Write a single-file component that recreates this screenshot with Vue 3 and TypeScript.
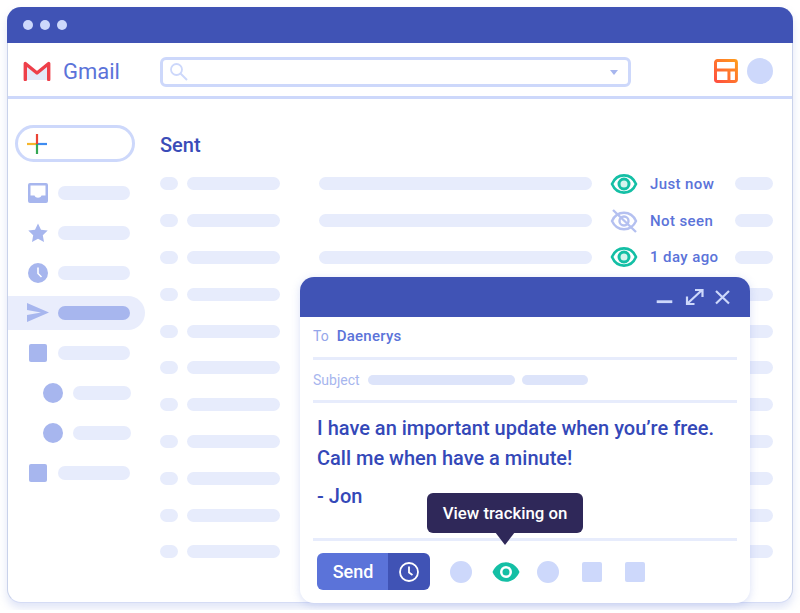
<template>
  <div class="window">
    <div class="titlebar">
      <span v-for="n in 3" :key="n" class="dot"></span>
    </div>

    <header class="topbar">
      <div class="brand">
        <svg class="gmail-logo" width="28" height="20" viewBox="0 0 28 20">
          <path d="M3 3 14 12 25 3V19H3Z" fill="#e3e9fa" />
          <path d="M2.300 18.500V2.500L14 12 25.700 2.500V18.500" fill="none" stroke="#ee3f4a" stroke-width="3.400" stroke-linejoin="round" stroke-linecap="round" />
        </svg>
        <span class="brand-name">Gmail</span>
      </div>
      <div class="search">
        <svg width="20" height="20" viewBox="0 0 20 20" fill="none" stroke="#cdd8fb" stroke-width="1.800">
          <circle cx="7.500" cy="7.500" r="5.500" />
          <path d="M11.500 11.500 18 18" stroke-width="2" />
        </svg>
        <span class="caret"></span>
      </div>
      <svg class="layout-icon" width="24" height="24" viewBox="0 0 24 24">
        <defs>
          <linearGradient id="lay" x1="1" y1="0" x2="0" y2="1">
            <stop offset="0" stop-color="#ff9a1c" />
            <stop offset="1" stop-color="#ff4f3f" />
          </linearGradient>
        </defs>
        <path d="M1.500 3.500a2 2 0 0 1 2-2h17a2 2 0 0 1 2 2v17a2 2 0 0 1-2 2h-17a2 2 0 0 1-2-2ZM1.500 11h21M15 11v11.500" fill="none" stroke="url(#lay)" stroke-width="3" />
      </svg>
      <span class="avatar"></span>
    </header>

    <div class="content">
      <aside class="sidebar">
        <div class="new-btn">
          <svg width="20" height="20" viewBox="0 0 20 20" stroke-width="2.200">
            <path d="M0 10H10" stroke="#f6b62c" />
            <path d="M10 10H20" stroke="#3f8cf0" />
            <path d="M10 0V10" stroke="#ea4335" />
            <path d="M10 10V20" stroke="#34a853" />
          </svg>
        </div>
        <nav class="nav">
          <div v-for="(item, i) in navItems" :key="i" class="nav-row" :class="{ active: item.icon === 'send', sub: item.icon === 'circle' }">
            <span class="nav-icon">
              <svg v-if="item.icon === 'inbox'" width="20" height="20" viewBox="0 0 20 20">
                <path d="M2 0H18a2 2 0 0 1 2 2V18a2 2 0 0 1-2 2H2a2 2 0 0 1-2-2V2A2 2 0 0 1 2 0ZM2.500 2.500V12.500H6.500C7.500 15.500 12.500 15.500 13.500 12.500H17.500V2.500Z" fill="#a7b6ee" fill-rule="evenodd" />
              </svg>
              <svg v-else-if="item.icon === 'star'" width="20" height="20" viewBox="0 0 20 20">
                <path d="M10 .5 13 6.700 19.700 7.600 14.800 12.300 16 19 10 15.700 4 19 5.200 12.300 .3 7.600 7 6.700Z" fill="#a7b6ee" />
              </svg>
              <svg v-else-if="item.icon === 'clock'" width="20" height="20" viewBox="0 0 20 20">
                <circle cx="10" cy="10" r="10" fill="#a7b6ee" />
                <path d="M10 4.500V10.500L13.500 14" fill="none" stroke="#fff" stroke-width="1.600" />
              </svg>
              <svg v-else-if="item.icon === 'send'" width="22" height="20" viewBox="0 0 22 20">
                <path d="M0 0 22 9.500 0 19V12L14 9.500 0 7Z" fill="#a7b6ee" />
              </svg>
              <span v-else-if="item.icon === 'square'" class="nav-square"></span>
              <span v-else class="nav-circle"></span>
            </span>
            <span class="nav-bar"></span>
          </div>
        </nav>
      </aside>

      <main class="mail">
        <h2 class="mail-title">Sent</h2>
        <div class="rows">
          <div v-for="(row, i) in rows" :key="i" class="row">
            <span class="pill p-check"></span>
            <span class="pill p-name"></span>
            <span class="pill p-subject"></span>
            <span class="status">
              <svg v-if="row === 'Not seen'" width="28" height="26" viewBox="0 0 28 26" fill="none" stroke="#b4c0f0" stroke-width="2.400">
                <path d="M2 13C7 2 21 2 26 13 21 24 7 24 2 13Z" />
                <circle cx="14" cy="13" r="4.500" />
                <path d="M3 2 26 24" />
              </svg>
              <svg v-else-if="row" width="28" height="20" viewBox="0 0 28 20" fill="none" stroke="#14bfa5">
                <path d="M2 10C7 -1.500 21 -1.500 26 10 21 21.500 7 21.500 2 10Z" stroke-width="2.600" />
                <circle cx="14" cy="10" r="5" stroke-width="3" fill="#d6f4ee" />
              </svg>
              <span v-if="row" class="status-text">{{ row }}</span>
            </span>
            <span class="pill p-end"></span>
          </div>
        </div>
      </main>
    </div>

    <section class="compose">
      <div class="compose-head">
        <svg width="82" height="22" viewBox="0 0 82 22" fill="none" stroke="#cdd8fb" stroke-width="2.200">
          <path d="M6.700 15.700H22.300" stroke-width="2.800" />
          <path d="M37.500 17.500 52 4M45 4H52.500V11M37 10.500V18H44.500" />
          <path d="M66 5 79 17.500M79 5 66 17.500" />
        </svg>
      </div>
      <div class="field field-to">
        <span class="field-label to-label">To</span>
        <span class="to-name">Daenerys</span>
      </div>
      <div class="field">
        <span class="field-label">Subject</span>
        <span class="subject-a"></span>
        <span class="subject-b"></span>
      </div>
      <div class="message">
        <p>I have an important update when you’re free.<br />Call me when have a minute!</p>
        <p class="sign">- Jon</p>
      </div>
      <div class="toolbar">
        <div class="send">
          <span class="send-label">Send</span>
          <span class="send-later">
            <svg width="20" height="20" viewBox="0 0 20 20" fill="none" stroke="#fff" stroke-width="1.800">
              <circle cx="10" cy="10" r="9" />
              <path d="M10 4.500V10.500L13.500 13" />
            </svg>
          </span>
        </div>
        <div class="tools">
          <span class="tool-circle"></span>
          <svg width="28" height="20" viewBox="0 0 28 20">
            <path d="M.5 10C6 -3 22 -3 27.500 10 22 23 6 23 .5 10Z" fill="#14bfa5" />
            <circle cx="14" cy="10" r="6" fill="#fff" />
            <circle cx="14" cy="10" r="3.500" fill="#14bfa5" />
          </svg>
          <span class="tool-circle tool-after-eye"></span>
          <span class="tool-square"></span>
          <span class="tool-square"></span>
        </div>
      </div>
      <div class="tooltip">View tracking on</div>
    </section>
  </div>
</template>

<script setup lang="ts">
const navItems = [
  { icon: 'inbox' },
  { icon: 'star' },
  { icon: 'clock' },
  { icon: 'send' },
  { icon: 'square' },
  { icon: 'circle' },
  { icon: 'circle' },
  { icon: 'square' },
]

const rows = ['Just now', 'Not seen', '1 day ago', '', '', '', '', '', '', '', '']
</script>

<style>
html,
body {
  background: #fff;
}
</style>

<style scoped>
.window {
  position: relative;
  box-sizing: border-box;
  width: 786px;
  height: 596px;
  margin: 7px;
  border: 1px solid #c9d2ea;
  border-top: none;
  border-bottom-color: #d5dcf5;
  border-radius: 14px;
  background: #fff;
  box-shadow: 0 5px 9px rgba(130, 150, 225, 0.25);
  font-family: Roboto, "Liberation Sans", sans-serif;
}

.titlebar {
  display: flex;
  align-items: center;
  gap: 7px;
  box-sizing: border-box;
  height: 36px;
  margin: 0 -1px;
  padding-left: 16px;
  border-radius: 14px 14px 0 0;
  background: #4053b5;
}

.dot {
  width: 10px;
  height: 10px;
  border-radius: 50%;
  background: #cdd8fb;
}

.topbar {
  display: flex;
  align-items: center;
  box-sizing: border-box;
  height: 56px;
  padding: 3px 19px 0 15px;
  border-bottom: 3px solid #cdd8fb;
}

.brand {
  display: flex;
  align-items: center;
  gap: 12px;
  width: 137px;
}

.brand-name {
  color: #5b73d9;
  font-size: 22px;
}

.search {
  display: flex;
  align-items: center;
  justify-content: space-between;
  box-sizing: border-box;
  width: 473px;
  height: 30px;
  margin-top: 2px;
  padding: 0 10px 0 6px;
  border: 3px solid #cdd8fb;
  border-radius: 6px;
}

.caret {
  width: 0;
  height: 0;
  border: 4px solid transparent;
  border-top: 5px solid #a7b6ee;
  border-bottom: none;
}

.layout-icon {
  margin-left: 83px;
}

.avatar {
  width: 26px;
  height: 26px;
  margin-left: 9px;
  border-radius: 50%;
  background: #cdd8fb;
}

.content {
  display: flex;
}

.sidebar {
  box-sizing: border-box;
  width: 152px;
  padding-top: 26px;
}

.new-btn {
  display: flex;
  align-items: center;
  box-sizing: border-box;
  width: 120px;
  height: 37px;
  margin-left: 7px;
  padding-left: 9px;
  border: 3px solid #cdd8fb;
  border-radius: 19px;
}

.nav {
  display: flex;
  flex-direction: column;
  margin-top: 11px;
}

.nav-row {
  display: flex;
  align-items: center;
  box-sizing: border-box;
  width: 137px;
  height: 40px;
  padding-left: 18px;
}

.nav-row.active {
  height: 34px;
  margin: 3px 0;
  border-radius: 0 17px 17px 0;
  background: #e9edfc;
}

.nav-icon {
  display: flex;
  align-items: center;
  justify-content: center;
  width: 24px;
  margin-right: 8px;
}

.nav-square {
  width: 18px;
  height: 18px;
  border-radius: 2px;
  background: #a7b6ee;
}

.nav-circle {
  width: 20px;
  height: 20px;
  border-radius: 50%;
  background: #a7b6ee;
}

.nav-bar {
  width: 72px;
  height: 14px;
  border-radius: 7px;
  background: #e7ecfc;
}

.nav-row.active .nav-bar {
  background: #a7b6ee;
}

.nav-row.sub .nav-icon {
  margin-left: 15px;
  margin-right: 8px;
}

.nav-row.sub .nav-bar {
  width: 58px;
}

.mail {
  flex: 1;
  min-width: 0;
}

.mail-title {
  margin: 33px 0 0;
  color: #3a4cb8;
  font-size: 20px;
  font-weight: 500;
  line-height: 26px;
}

.rows {
  display: flex;
  flex-direction: column;
  gap: 23.8px;
  margin-top: 19.4px;
}

.row {
  display: flex;
  align-items: center;
  height: 13px;
}

.pill {
  height: 13px;
  border-radius: 7px;
  background: #e7ecfc;
}

.p-check {
  width: 18px;
}

.p-name {
  width: 93px;
  margin-left: 9px;
}

.p-subject {
  width: 273px;
  margin-left: 39px;
}

.status {
  display: flex;
  align-items: center;
  width: 143px;
  padding-left: 18px;
  box-sizing: border-box;
  flex-shrink: 0;
}

.status-text {
  margin-left: 12px;
  color: #5b73d9;
  font-size: 15px;
  font-weight: 500;
  letter-spacing: 0.4px;
}

.p-end {
  width: 38px;
}

.compose {
  position: absolute;
  left: 292px;
  top: 270px;
  display: flex;
  flex-direction: column;
  box-sizing: border-box;
  width: 450px;
  height: 326px;
  border-radius: 14px;
  background: #fff;
  box-shadow: 0 2px 8px rgba(130, 150, 225, 0.3);
}

.compose-head {
  display: flex;
  align-items: center;
  justify-content: flex-end;
  box-sizing: border-box;
  height: 40px;
  padding-right: 18px;
  border-radius: 14px 14px 0 0;
  background: #4053b5;
}

.field {
  display: flex;
  align-items: center;
  box-sizing: border-box;
  height: 43px;
  margin: 0 13px;
  border-bottom: 3px solid #e7ecfc;
}

.field-to {
  padding-bottom: 2px;
}

.field-label {
  color: #a7b6ee;
  font-size: 14px;
}

.to-label {
  color: #94a6ea;
}

.to-name {
  margin-left: 8px;
  color: #5b73d9;
  font-size: 15px;
  font-weight: 500;
  letter-spacing: 0.25px;
}

.subject-a {
  width: 147px;
  height: 10px;
  margin-left: 8px;
  border-radius: 5px;
  background: #dde4fa;
}

.subject-b {
  width: 66px;
  height: 10px;
  margin-left: 7px;
  border-radius: 5px;
  background: #dde4fa;
}

.message {
  box-sizing: border-box;
  height: 138px;
  margin: 0 13px;
  padding: 10px 4px 0;
  border-bottom: 3px solid #e7ecfc;
  color: #3448b8;
  font-size: 20px;
  font-weight: 500;
  line-height: 30px;
}

.message p {
  margin: 0;
}

.message .sign {
  margin-top: 8px;
}

.toolbar {
  display: flex;
  align-items: center;
  padding: 12px 0 0 17px;
}

.send {
  display: flex;
  width: 113px;
  height: 37px;
  border-radius: 6px;
  overflow: hidden;
  color: #fff;
}

.send-label {
  display: flex;
  align-items: center;
  justify-content: center;
  width: 71px;
  padding-left: 1px;
  box-sizing: border-box;
  background: #5b73d9;
  font-size: 18px;
  font-weight: 500;
}

.send-later {
  display: flex;
  flex: 1;
  align-items: center;
  justify-content: center;
  background: #4053b5;
}

.tools {
  display: flex;
  align-items: center;
  gap: 20px;
  margin-left: 20px;
}

.tool-circle {
  width: 22px;
  height: 22px;
  border-radius: 50%;
  background: #cdd8fb;
}

.tool-after-eye {
  margin-left: -3px;
}

.tool-square {
  width: 20px;
  height: 20px;
  margin-left: 3px;
  border-radius: 2px;
  background: #cdd8fb;
}

.tooltip {
  position: absolute;
  left: 127px;
  top: 216px;
  width: 156px;
  height: 40px;
  border-radius: 6px;
  background: #2f2859;
  color: #fff;
  font-size: 16.8px;
  font-weight: 500;
  line-height: 40px;
  text-align: center;
}

.tooltip::after {
  content: '';
  position: absolute;
  left: 68px;
  top: 39px;
  border: 10px solid transparent;
  border-top: 13px solid #2f2859;
  border-bottom: none;
}
</style>
